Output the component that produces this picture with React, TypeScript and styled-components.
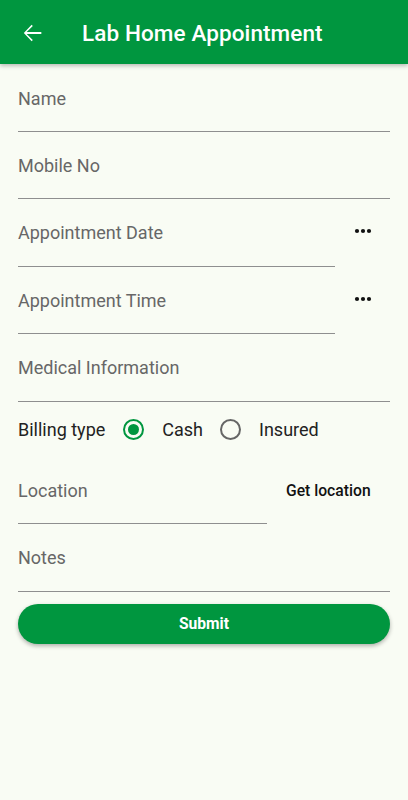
import React, { useState } from "react";
import styled, { createGlobalStyle } from "styled-components";

const Global = createGlobalStyle`
  html, body { margin: 0; padding: 0; background: #f9fcf4; }
  body { font-family: Roboto, "Noto Sans", Arial, sans-serif; }
  * { box-sizing: border-box; }
`;

const GREEN = "#00963f";

const Page = styled.div`
  width: 408px;
  min-height: 800px;
  background: #f9fcf4;
  display: flex;
  flex-direction: column;
`;

const AppBar = styled.header`
  height: 64px;
  flex-shrink: 0;
  background: ${GREEN};
  display: flex;
  align-items: center;
  padding: 2px 0 0 16px;
  box-shadow: 0 2px 4px rgba(0, 0, 0, 0.25);
  position: relative;
  z-index: 1;
`;

const BackBtn = styled.button`
  width: 32px;
  height: 32px;
  border: none;
  background: transparent;
  padding: 0;
  display: flex;
  align-items: center;
  justify-content: center;
  color: #fff;
`;

const Title = styled.h1`
  margin: 0 0 0 34px;
  color: #fff;
  font-size: 22.5px;
  font-weight: 500;
  letter-spacing: 0.1px;
`;

const Form = styled.main`
  display: flex;
  flex-direction: column;
  padding: 1px 18px 0 18px;
`;

const Row = styled.div`
  display: flex;
  align-items: center;
  flex-shrink: 0;
`;

const Field = styled.div<{ $width?: number; $height?: number }>`
  height: ${(p) => p.$height ?? 67}px;
  flex-shrink: 0;
  ${(p) => (p.$width ? `width: ${p.$width}px;` : "")}
  border-bottom: 1px solid #8f8f8f;
  padding-top: 24px;
  font-size: 18px;
  line-height: 20px;
  color: #676767;
`;

const DotsBtn = styled.button`
  margin-left: 19px;
  margin-top: -3px;
  border: none;
  background: transparent;
  width: 18px;
  height: 20px;
  padding: 0;
  display: flex;
  align-items: center;
  justify-content: center;
`;

const Billing = styled.div`
  height: 55px;
  flex-shrink: 0;
  display: flex;
  align-items: center;
  font-size: 18px;
  color: #222;
`;

const BillingTitle = styled.span`
  margin-right: 18px;
`;

const RadioLabel = styled.label<{ $gap?: number }>`
  display: flex;
  align-items: center;
  cursor: pointer;
  margin-right: ${(p) => p.$gap ?? 0}px;
`;

const RadioCircle = styled.span<{ $checked: boolean }>`
  width: 21px;
  height: 21px;
  border-radius: 50%;
  border: 2px solid ${(p) => (p.$checked ? GREEN : "#666")};
  display: flex;
  align-items: center;
  justify-content: center;
  margin: 0 18px 0 0;
  &::after {
    content: "";
    width: 11px;
    height: 11px;
    border-radius: 50%;
    background: ${(p) => (p.$checked ? GREEN : "transparent")};
  }
`;

const LocationBtn = styled.button`
  border: none;
  background: transparent;
  font-family: inherit;
  font-size: 15.7px;
  font-weight: 500;
  color: #111;
  margin-left: 19px;
  margin-top: 0;
  padding: 0;
`;

const Submit = styled.button`
  margin-top: 12.5px;
  height: 40px;
  flex-shrink: 0;
  border: none;
  border-radius: 20px;
  background: ${GREEN};
  color: #fff;
  font-family: inherit;
  font-size: 15.6px;
  font-weight: 700;
  box-shadow: 0 2px 4px rgba(0, 0, 0, 0.3);
`;

const Dots = () => (
  <svg width="18" height="6" viewBox="0 0 18 6">
    <circle cx="3" cy="3" r="2.1" fill="#111" />
    <circle cx="9" cy="3" r="2.1" fill="#111" />
    <circle cx="15" cy="3" r="2.1" fill="#111" />
  </svg>
);

export default function App() {
  const [billing, setBilling] = useState("cash");
  return (
    <Page>
      <Global />
      <AppBar>
        <BackBtn aria-label="back">
          <svg width="28" height="28" viewBox="0 0 24 24">
            <path d="M20 11.2H7.4l5.3-5.3L11.7 5 5 12l6.7 7 1-.9-5.3-5.3H20v-1.6z" fill="#fff" />
          </svg>
        </BackBtn>
        <Title>Lab Home Appointment</Title>
      </AppBar>
      <Form>
        <Field>Name</Field>
        <Field>Mobile No</Field>
        <Row>
          <Field $width={317} $height={67.5}>Appointment Date</Field>
          <DotsBtn aria-label="pick date">
            <Dots />
          </DotsBtn>
        </Row>
        <Row>
          <Field $width={317} $height={67.5}>Appointment Time</Field>
          <DotsBtn aria-label="pick time">
            <Dots />
          </DotsBtn>
        </Row>
        <Field $height={67.5}>Medical Information</Field>
        <Billing>
          <BillingTitle>Billing type</BillingTitle>
          <RadioLabel $gap={17} onClick={() => setBilling("cash")}>
            <RadioCircle $checked={billing === "cash"} />
            <span>Cash</span>
          </RadioLabel>
          <RadioLabel onClick={() => setBilling("insured")}>
            <RadioCircle $checked={billing === "insured"} />
            <span>Insured</span>
          </RadioLabel>
        </Billing>
        <Row>
          <Field $width={249}>Location</Field>
          <LocationBtn>Get location</LocationBtn>
        </Row>
        <Field $height={68}>Notes</Field>
        <Submit>Submit</Submit>
      </Form>
    </Page>
  );
}
